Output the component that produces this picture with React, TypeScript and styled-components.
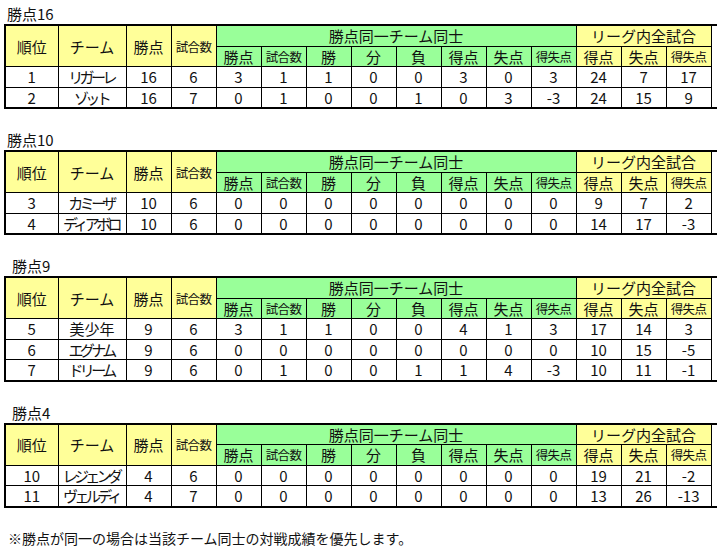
import React from "react";
import styled, { createGlobalStyle } from "styled-components";

const Global = createGlobalStyle`
  html, body { margin: 0; padding: 0; background: #fff; overflow: hidden; }
  body { font-family: "Noto Sans CJK JP", "Noto Sans", sans-serif; color: #111; }
`;

const Page = styled.div`
  padding: 3px 0 0 4px;
`;

const Section = styled.section<{ $first?: boolean }>`
  margin-top: ${(p) => (p.$first ? 0 : 20)}px;
`;

const Title = styled.div<{ $indent: number }>`
  font-size: 15px;
  line-height: 21px;
  height: 21px;
  padding-left: ${(p) => p.$indent}px;
`;

const Table = styled.table`
  border-collapse: collapse;
  table-layout: fixed;
  width: 706px;
  border: 2px solid #000;
  font-size: 15px;
`;

const Col = styled.col<{ $w: number }>`
  width: ${(p) => p.$w}px;
`;

const Cell = styled.td<{ $kana?: boolean }>`
  border: 1px solid #000;
  background: #fff;
  text-align: center;
  vertical-align: middle;
  padding: 0;
  height: 19.5px;
  line-height: 19px;
  font-size: 15px;
  letter-spacing: ${(p) => (p.$kana ? "-3.6px" : "0")};
  text-indent: ${(p) => (p.$kana ? "-2px" : "0")};
  white-space: nowrap;
  overflow: hidden;
`;

const HeadCell = styled.th<{ $tone: "yellow" | "green"; $small?: boolean }>`
  border: 1px solid #000;
  background: ${(p) => (p.$tone === "yellow" ? "#ffff99" : "#99ff99")};
  text-align: center;
  vertical-align: middle;
  padding: 0;
  height: 19.5px;
  line-height: 19px;
  font-weight: 400;
  font-size: ${(p) => (p.$small ? "12.5px" : "15px")};
  letter-spacing: ${(p) => (p.$small ? "-0.6px" : "0")};
  white-space: nowrap;
  overflow: hidden;
`;

type Row = (string | number)[];

const widths = [53, 68, 45, 45, 45, 45, 45, 45, 45, 45, 45, 45, 45, 45, 45, 45];
const greenSub = ["勝点", "試合数", "勝", "分", "負", "得点", "失点", "得失点"];
const yellowSub = ["得点", "失点", "得失点"];

const isKana = (v: string | number) => typeof v === "string" && /^[\u30a0-\u30ff]+$/.test(v);

function Standings({ title, indent, rows, first }: { title: string; indent: number; rows: Row[]; first?: boolean }) {
  return (
    <Section $first={first}>
      <Title $indent={indent}>{title}</Title>
      <Table>
        <colgroup>
          {widths.map((w, i) => (
            <Col key={i} $w={w} />
          ))}
        </colgroup>
        <tbody>
          <tr>
            <HeadCell rowSpan={2} $tone="yellow">順位</HeadCell>
            <HeadCell rowSpan={2} $tone="yellow">チーム</HeadCell>
            <HeadCell rowSpan={2} $tone="yellow">勝点</HeadCell>
            <HeadCell rowSpan={2} $tone="yellow" $small>試合数</HeadCell>
            <HeadCell colSpan={8} $tone="green">勝点同一チーム同士</HeadCell>
            <HeadCell colSpan={3} $tone="yellow">リーグ内全試合</HeadCell>
          </tr>
          <tr>
            {greenSub.map((h, i) => (
              <HeadCell key={i} $tone="green" $small={h.length === 3}>{h}</HeadCell>
            ))}
            {yellowSub.map((h, i) => (
              <HeadCell key={i} $tone="yellow" $small={h.length === 3}>{h}</HeadCell>
            ))}
          </tr>
          {rows.map((r, i) => (
            <tr key={i}>
              {r.map((v, j) => (
                <Cell key={j} $kana={isKana(v)}>{v}</Cell>
              ))}
            </tr>
          ))}
        </tbody>
      </Table>
    </Section>
  );
}

const Note = styled.p`
  margin: 20px 0 0 4px;
  font-size: 14px;
  line-height: 20px;
`;

export default function App() {
  return (
    <Page>
      <Global />
      <Standings
        first
        title="勝点16"
        indent={3}
        rows={[
          [1, "リガーレ", 16, 6, 3, 1, 1, 0, 0, 3, 0, 3, 24, 7, 17],
          [2, "ゾット", 16, 7, 0, 1, 0, 0, 1, 0, 3, -3, 24, 15, 9],
        ]}
      />
      <Standings
        title="勝点10"
        indent={3}
        rows={[
          [3, "カミーザ", 10, 6, 0, 0, 0, 0, 0, 0, 0, 0, 9, 7, 2],
          [4, "ディアボロ", 10, 6, 0, 0, 0, 0, 0, 0, 0, 0, 14, 17, -3],
        ]}
      />
      <Standings
        title="勝点9"
        indent={8}
        rows={[
          [5, "美少年", 9, 6, 3, 1, 1, 0, 0, 4, 1, 3, 17, 14, 3],
          [6, "エグナム", 9, 6, 0, 0, 0, 0, 0, 0, 0, 0, 10, 15, -5],
          [7, "ドリーム", 9, 6, 0, 1, 0, 0, 1, 1, 4, -3, 10, 11, -1],
        ]}
      />
      <Standings
        title="勝点4"
        indent={8}
        rows={[
          [10, "レジェンダ", 4, 6, 0, 0, 0, 0, 0, 0, 0, 0, 19, 21, -2],
          [11, "ヴェルディ", 4, 7, 0, 0, 0, 0, 0, 0, 0, 0, 13, 26, -13],
        ]}
      />
      <Note>※勝点が同一の場合は当該チーム同士の対戦成績を優先します。</Note>
    </Page>
  );
}
